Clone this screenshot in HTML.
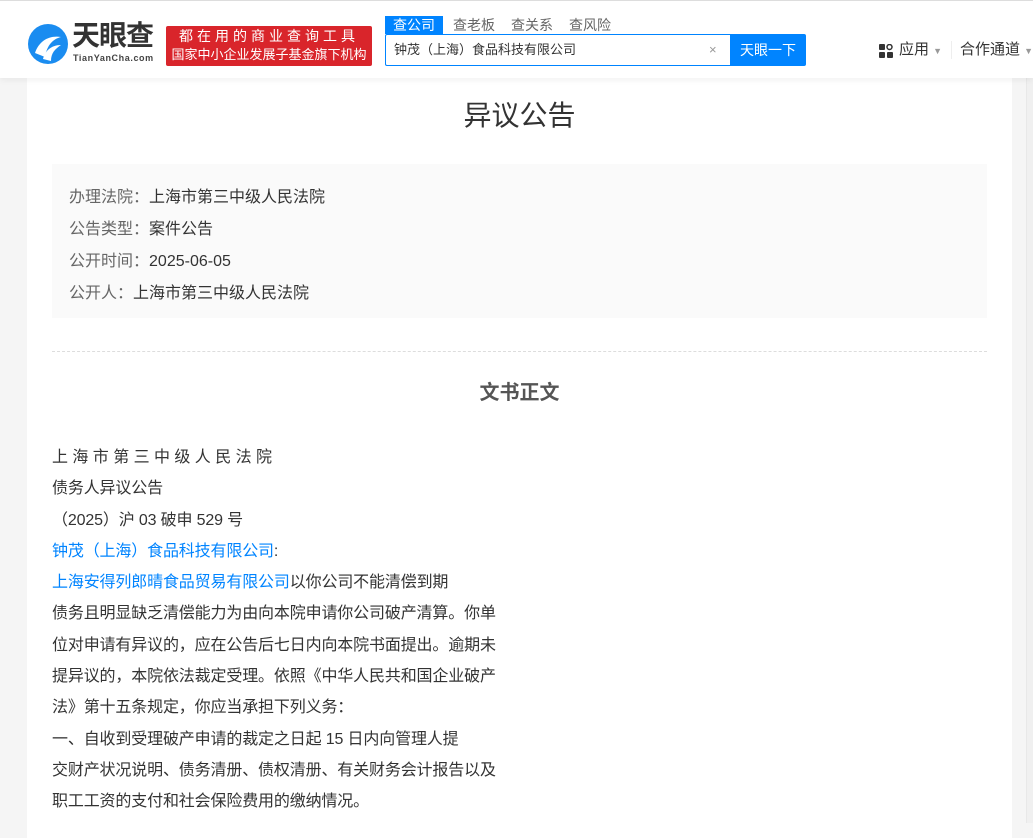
<!DOCTYPE html>
<html><head><meta charset="utf-8"><style>
*{margin:0;padding:0;box-sizing:border-box}
body{width:1033px;height:823px;overflow:hidden;background:#f5f5f5;font-family:"Liberation Sans","Noto Sans CJK SC",sans-serif;color:#333;position:relative}
.hdr{position:absolute;left:0;top:0;width:1033px;height:78px;background:#fff;border-top:1px solid #ddd;box-shadow:0 2px 6px rgba(0,0,0,.06);z-index:2}
.card{position:absolute;left:27px;top:78px;width:985px;height:760px;background:#fff}
.abs{position:absolute;white-space:nowrap}
.info{position:absolute;left:25px;top:86px;width:935px;height:154px;background:#fafafa}
.info div{position:absolute;left:17px;font-size:16px;color:#333}
.info span{color:#666}
.body{position:absolute;left:25px;top:364px;font-size:16px;line-height:31.3px;color:#333;letter-spacing:-0.15px}
.blue{color:#0084ff}
</style></head><body>
<div class="hdr">
  <svg class="abs" style="left:27px;top:22px" width="42" height="42" viewBox="0 0 42 42">
    <circle cx="21" cy="21" r="20" fill="#1a8cf0"/>
    <path d="M8 30 C12 18 22 12 34 14 C26 16 20 22 18 34 Z" fill="#fff"/>
    <path d="M16 36 C18 28 24 22 34 22 C28 26 24 30 24 38 Z" fill="#fff"/>
  </svg>
  <div class="abs" style="left:72px;top:20px;font-size:28px;line-height:30px;font-weight:bold;color:#333;letter-spacing:-1px">天眼查</div>
  <div class="abs" style="left:73px;top:52px;font-size:9px;line-height:10px;font-weight:bold;color:#444;letter-spacing:.6px">TianYanCha.com</div>
  <div class="abs" style="left:166px;top:25px;width:206px;height:40px;background:#d9252b;border-radius:2px;color:#fff;text-align:center">
    <div style="font-size:14px;line-height:19px;letter-spacing:4px;margin-top:1px">都在用的商业查询工具</div>
    <div style="font-size:13px;line-height:18px">国家中小企业发展子基金旗下机构</div>
  </div>
  <div class="abs" style="left:385px;top:15px;width:58px;height:18px;background:#0084ff;color:#fff;font-size:14px;text-align:center;line-height:18px">查公司</div>
  <div class="abs" style="left:453px;top:15px;font-size:14px;color:#666;line-height:18px">查老板</div>
  <div class="abs" style="left:511px;top:15px;font-size:14px;color:#666;line-height:18px">查关系</div>
  <div class="abs" style="left:569px;top:15px;font-size:14px;color:#666;line-height:18px">查风险</div>
  <div class="abs" style="left:385px;top:33px;width:346px;height:32px;border:1px solid #0084ff;border-right:none;border-radius:2px 0 0 2px;font-size:13px;line-height:30px;padding-left:8px;color:#333">钟茂（上海）食品科技有限公司<span style="position:absolute;left:323px;color:#999;font-size:13px">×</span></div>
  <div class="abs" style="left:730px;top:33px;width:76px;height:32px;background:#0084ff;color:#fff;font-size:14px;line-height:32px;text-align:center;border-radius:0 2px 2px 0">天眼一下</div>
  <svg class="abs" style="left:879px;top:43px" width="14" height="14" viewBox="0 0 14 14"><rect x="0" y="0" width="6" height="6" rx="1" fill="#333"/><circle cx="10.5" cy="3" r="2.5" fill="none" stroke="#333" stroke-width="1.5"/><rect x="0" y="8" width="6" height="6" rx="1" fill="#333"/><rect x="8" y="8" width="6" height="6" rx="1" fill="#333"/></svg>
  <div class="abs" style="left:899px;top:38px;font-size:15px;color:#333;line-height:22px">应用 <span style="font-size:9px;color:#999">▼</span></div>
  <div class="abs" style="left:951px;top:40px;width:1px;height:18px;background:#eee"></div>
  <div class="abs" style="left:960px;top:38px;font-size:15px;color:#333;line-height:22px">合作通道 <span style="font-size:9px;color:#999">▼</span></div>
</div>
<div class="abs" style="left:1026px;top:78px;width:7px;height:745px;background:#f0f0f0;border-left:1px solid #e8e8e8"></div>
<div class="card">
  <div class="abs" style="left:0;width:985px;top:16px;text-align:center;font-size:28px;color:#333">异议公告</div>
  <div class="info">
    <div style="top:19px"><span>办理法院：</span>上海市第三中级人民法院</div>
    <div style="top:51px"><span>公告类型：</span>案件公告</div>
    <div style="top:83px"><span>公开时间：</span>2025-06-05</div>
    <div style="top:115px"><span>公开人：</span>上海市第三中级人民法院</div>
  </div>
  <div class="abs" style="left:25px;top:273px;width:935px;border-top:1px dashed #ddd"></div>
  <div class="abs" style="left:0;width:985px;top:298px;text-align:center;font-size:20px;font-weight:bold;color:#555">文书正文</div>
  <div class="body">
    <span style="letter-spacing:4.4px">上海市第三中级人民法院</span><br>
    债务人异议公告<br>
    （2025）沪 03 破申 529 号<br>
    <span class="blue">钟茂（上海）食品科技有限公司</span>:<br>
    <span class="blue">上海安得列郎晴食品贸易有限公司</span>以你公司不能清偿到期<br>
    债务且明显缺乏清偿能力为由向本院申请你公司破产清算。你单<br>
    位对申请有异议的，应在公告后七日内向本院书面提出。逾期未<br>
    提异议的，本院依法裁定受理。依照《中华人民共和国企业破产<br>
    法》第十五条规定，你应当承担下列义务：<br>
    一、自收到受理破产申请的裁定之日起 15 日内向管理人提<br>
    交财产状况说明、债务清册、债权清册、有关财务会计报告以及<br>
    职工工资的支付和社会保险费用的缴纳情况。
  </div>
</div>
</body></html>
